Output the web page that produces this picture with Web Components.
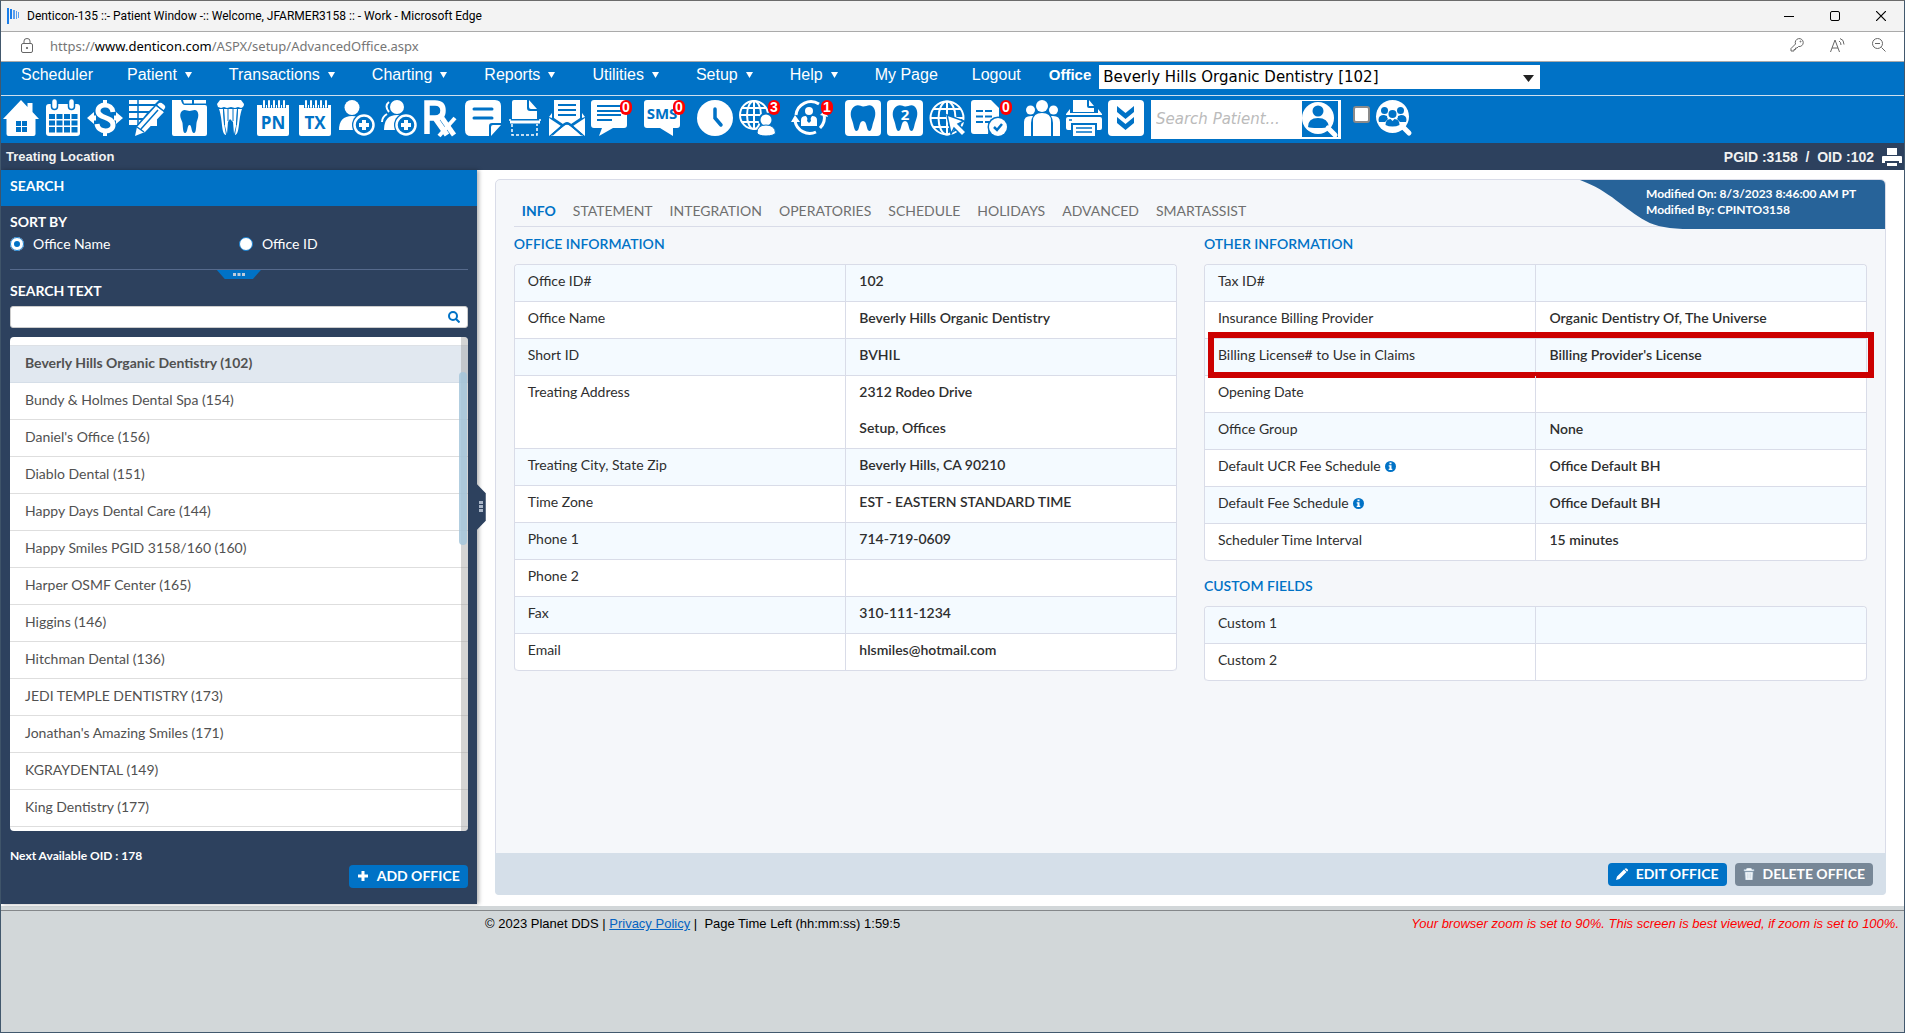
<!DOCTYPE html>
<html lang="en">
<head>
<meta charset="utf-8">
<title>Denticon - Advanced Office</title>
<style>
html,body{height:100%}
body{margin:0;
--blue:#0072c6;--navy:#2d415e;--line:#d9dce8;--panel:#f5f7fa;--bar:#d5dfe9;
--ui:Lato,"Open Sans",sans-serif;--sys:"Liberation Sans",Arial,sans-serif}
</style>
</head>
<body>
<app-window></app-window>
<script>
const define=(name,html,setup)=>{
  const tpl=document.createElement('template');
  tpl.innerHTML='<style>*{box-sizing:border-box}button{font:inherit;cursor:pointer}a{text-decoration:none;color:inherit}</style>'+html;
  customElements.define(name,class extends HTMLElement{
    constructor(){super();this.attachShadow({mode:'open'}).append(tpl.content.cloneNode(true));}
    connectedCallback(){if(setup&&!this.ready){this.ready=true;setup(this,this.shadowRoot);}}
  });
};

const W='fill="#fff"',B='fill="#0072c6"',SW='fill="none" stroke="#fff"',SB='fill="none" stroke="#0072c6"';
const tooth='M10 6C13 4 16 6 18 6.500S24 4 27 6C31 9 31 15 29 20C27 25 27 31 24.500 31C21 31 22.500 21 18 21S15 31 11.500 31C9 31 9 25 7 20C5 15 5 9 10 6Z';
const ICONS={
home:`<path ${W} d="M0 19 18 0l6.500 7V3h5v9L36 19h-3.500v15q0 2-2 2h-25q-2 0-2-2V19Z"/><path ${B} d="M13 21h5v5h-5zM19 21h5v5h-5zM13 27h5v5h-5zM19 27h5v5h-5z"/>`,
calendar:`<path ${W} d="M4 4h28q3 0 3 3v26q0 3-3 3H4q-3 0-3-3V7q0-3 3-3Z"/><rect x="6.500" y="-1.500" width="6" height="11" rx="3" ${W} stroke="#0072c6" stroke-width="1.500"/><rect x="23.500" y="-1.500" width="6" height="11" rx="3" ${W} stroke="#0072c6" stroke-width="1.500"/><path ${B} d="M4 14h6v5H4zM11.500 14h6v5h-6zM19 14h6v5h-6zM26.500 14h6v5h-6zM4 20.500h6v5H4zM11.500 20.500h6v5h-6zM19 20.500h6v5h-6zM26.500 20.500h6v5h-6zM4 27h6v5.500H4zM11.500 27h6v5.500h-6zM19 27h6v5.500h-6zM26.500 27h6v5.500h-6z"/>`,
dollar:`<path ${SW} stroke-width="5" d="M26 12C25 3 11 3 11 11C11 19 26 16 26 25C26 33 11 33 10 24"/><path ${W} d="M16 0h4v6h-4zM16 30h4v6h-4zM0 18l7-6v3.500h2v5H7V24ZM36 18l-7-6v3.500h-2v5h2V24Z"/>`,
notes:`<path ${W} d="M0 0h30l-4 4H0zM0 6h25l-5 5H0zM0 13h18l-4 5H0zM0 20h12l-4 5H0z"/><path ${SB} stroke-width="1.500" d="M9 0v26"/><path ${W} d="M6 36 8 27 27 6l8 6-19 20Z"/><path ${W} d="M28 5l2-2q2-1 4 1 3 2 2 4l-2 3Z"/><path ${W} d="M28 18v8h-7Z"/><path ${SB} stroke-width="1.500" d="m27 5 9 7M8 27l7 5M12 29l17-19"/>`,
chart:`<path ${W} d="M2 0h8q1 5 4 5h20q2 0 2 2v27q0 2-2 2H3q-2 0-2-2V0Z"/><path ${W} d="M12 0h9v3.500h-8zM23 0h12v3.500H23z"/><path ${B} d="M11 11C14 9 16 11 18.500 11S24 9 26 11C29 15 26 20 25.500 23C25 28 25 33 23 33C20 33 21 25 18.500 25S17 33 14 33C12 33 12 28 11.500 23C11 20 7 15 11 11Z"/>`,
perio:`<path ${W} d="M7 0h21l3 4q0 3-3 4l-3-1-3 1-4-1-4 1-3-1-3 1-3-1-1-3Z"/><path ${W} d="M6 9h4l1 14 2 12C8 34 10 20 6 9ZM29 9h-4l-1 14-2 12c5-1 3-15 7-26ZM11 9h13l-1 17-2 8-1-12-3-3-2 3-1 12-2-8Z"/><path ${SB} d="M10.500 9l1 16M15 9v12M20 9v12M24.500 9l-1 16"/>`,
pn:`<path ${W} d="M2 5h32v29q0 2-2 2H4q-2 0-2-2Z"/><path ${SB} stroke-width="4" d="M9 0v8M14 0v8M19 0v8M24 0v8M29 0v8"/><path ${SW} stroke-width="2" stroke-linecap="round" d="M9 1v6M14 1v6M19 1v6M24 1v6M29 1v6"/><text x="18" y="29" text-anchor="middle" font-family="Open Sans" font-weight="700" font-size="17" ${B}>PN</text>`,
user:`<circle ${W} cx="13" cy="7.500" r="7.500"/><path ${W} d="M0 30Q0 16 13 16Q19 16 22 19L14 30Z"/><circle cx="25" cy="25" r="12" ${B}/><circle cx="25" cy="25" r="9.500" ${SW} stroke-width="2.500"/><path ${W} d="M23 20h4v3h3v4h-3v3h-4v-3h-3v-4h3Z"/>`,
users:`<path ${SW} stroke-width="2" d="M8 2Q3 6 8 12M6 14Q1 17 1 22"/><circle ${W} cx="16" cy="7" r="7"/><path ${W} d="M3 30Q3 15 16 15Q21 15 24 18L14 30Z"/><circle cx="25" cy="25" r="12" ${B}/><circle cx="25" cy="25" r="9.500" ${SW} stroke-width="2.500"/><path ${W} d="M23 20h4v3h3v4h-3v3h-4v-3h-3v-4h3Z"/>`,
rx:`<path ${SW} stroke-width="5.500" d="M4 34V3H12Q20 3 20 10.500T12 18H4M12 18 24 35"/><path ${SW} stroke-width="4" d="M16 36 32 18"/><path ${SW} stroke-width="5" d="m19 18 12 17"/>`,
note:`<path ${W} d="M6 0h24q6 0 6 6v17H27q-3 0-3 3v10H6q-6 0-6-6V6q0-6 6-6ZM36 25 26 36V27q0-2 2-2Z"/><path ${SB} stroke-width="3" stroke-linecap="round" d="M9 9h18M9 18h18"/>`,
scan:`<path ${W} d="M7 0h13v8q0 3 3 3h7v8H5V2q0-2 2-2Z"/><path ${W} d="m22 0 8 9h-6q-2 0-2-2ZM3 20.500h30v3H3z"/><path ${SW} stroke-width="1.500" d="M3 21v-2M33 21v-2"/><path ${SW} stroke-width="1.500" stroke-dasharray="3 2" d="M5 24v11h25V24"/>`,
mail:`<path ${W} d="M5 0h26v18l-9 6q-4-4-8 0l-9-6Z"/><path ${W} d="M0 17l3-4v5ZM36 17l-3-4v5ZM0 18l12 8L0 36ZM36 18l-12 8 12 10ZM2 36 15 26q3-3 6 0L34 36Z"/><path ${SB} stroke-width="2" d="M9 5h18M9 10h18M9 15h18M3 35l10-9q5-5 10 0l10 9"/>`,
chat:`<path ${W} d="M3 0h30q3 0 3 3v22q0 3-3 3H22L8 36l3-8H3q-3 0-3-3V3q0-3 3-3Z"/><path ${SB} stroke-width="2" d="M6 6h24M6 11h24M6 15h24M6 20h15"/>`,
sms:`<path ${W} d="M3 0h30q3 0 3 3v22q0 3-3 3h-4v8l-13-8H3q-3 0-3-3V3q0-3 3-3Z"/><text x="18" y="19" text-anchor="middle" font-family="Open Sans" font-weight="700" font-size="15" ${B}>SMS</text>`,
clock:`<circle ${W} cx="18" cy="18" r="18"/><path ${SB} stroke-width="3.500" stroke-linecap="round" d="M18 9v9l6 7"/>`,
globeuser:`<g ${SW} stroke-width="2"><circle cx="15" cy="15" r="14"/><ellipse cx="15" cy="15" rx="7" ry="14"/><path d="M15 1v28M1 15h28M3 8h24M3 22h24"/></g><circle cx="27" cy="20" r="7.500" ${B}/><circle cx="27" cy="20" r="5.500" ${W}/><path ${W} stroke="#0072c6" d="M18 33q0-8 9-8t9.500 8q-2 3-9.500 3T18 33Z"/>`,
sync:`<path ${SW} stroke-width="3" d="M4 15A15 15 0 0 1 27 4M32 14A15 15 0 0 1 28 28M24 32A15 15 0 0 1 3 21"/><path ${W} d="M-1 22 3 15 8 22ZM28 15l5-5 3 7Z"/><circle ${W} cx="17" cy="11" r="4"/><path ${W} d="M9 26v-6q0-4 5-4l3 5 3-5q5 0 5 4v6Z"/><path ${B} d="m16 16-1 5 2 2 2-2-1-5Z"/>`,
tooth:`<rect ${W} width="36" height="36" rx="4"/><path ${B} d="${tooth}"/>`,
tooth2:`<rect ${W} width="36" height="36" rx="4"/><path ${B} d="${tooth}"/><text x="18" y="20" text-anchor="middle" font-family="Open Sans" font-weight="700" font-size="15" ${W}>2</text>`,
globe:`<g ${SW} stroke-width="2"><circle cx="18" cy="18" r="16.500"/><ellipse cx="18" cy="18" rx="8.500" ry="16.500"/><path d="M18 1v34M1 18h34M4 9h28M4 27h28"/></g><path ${W} stroke="#0072c6" stroke-width="1.500" d="m18 15 17 6-6 3 8 8-4 4-8-8-3 6Z"/>`,
doc:`<path ${W} d="M3 0h17l8 8v11q-10 1-11 15H3q-3 0-3-3V3q0-3 3-3Z"/><path ${SB} stroke-width="2" d="M5 11h7M14 11h7M5 16.500h7M14 16.500h7M5 22h7M14 22h5"/><circle cx="27" cy="27" r="10.500" ${B}/><circle cx="27" cy="27" r="9" ${W}/><path ${SB} stroke-width="2.500" d="m23 27 3 3 5-6"/>`,
group:`<circle ${W} cx="18" cy="6" r="6"/><circle ${W} cx="6.500" cy="10" r="4.500"/><circle ${W} cx="29.500" cy="10" r="4.500"/><path ${W} d="M9 36V21q0-8 9-8t9 8v15ZM0 36V22q0-6 7-6h2q-2 3-2 7v13ZM36 36V22q0-6-7-6h-2q2 3 2 7v13Z"/>`,
printer:`<path ${W} d="M7 0h14v6q0 2 2 2h5v4H7ZM23 0l5 6h-5Z"/><path ${W} d="M4 9v4h28V9l4 5v1H0v-1ZM2 17h32q2 0 2 2v9q0 2-2 2h-3v-7H5v7H2q-2 0-2-2v-9q0-2 2-2Z"/><path ${W} d="M7 25h22v11H7z"/><path ${SB} stroke-width="1.500" d="M10 28h16M10 32h16M3 20h3"/>`,
down:`<rect ${W} width="36" height="36" rx="4"/><path ${B} d="m9 6 8.500 7L26 6v6l-8.500 7L9 12ZM9 17l8.500 7 8.500-7v6l-8.500 7L9 23Z"/>`,
find:`<path ${B} d="M0 0h36v36H0z"/><circle ${W} cx="16" cy="17" r="16"/><circle ${B} cx="16" cy="10" r="5.500"/><path ${B} d="M6 26q0-9 10-9t11 9q-3 1-11 1T6 26Z"/><path ${SW} stroke-width="5" stroke-linecap="round" d="m26 27 7 7"/>`,
findgroup:`<circle ${W} cx="16.500" cy="16.500" r="16.500"/><path ${SW} stroke-width="5" stroke-linecap="round" d="m27 27 6 6"/><circle ${B} cx="8.500" cy="10.500" r="3.500"/><circle ${B} cx="24.500" cy="10.500" r="3.500"/><path ${B} d="M2.500 20q0-5 5.500-5l3 1q0 2 1 3l-3 3H3ZM30.500 20q0-5-5.500-5l-3 1q0 2-1 3l3 3h6Z"/><circle ${B} cx="16.500" cy="14" r="4"/><path ${B} d="M9.500 25q0-6 5-6l2 2 2-2q5 0 5 6-3 1.500-7 1.500t-7-1.500Z"/>`
};
ICONS.tx=ICONS.pn.replace('>PN<','>TX<');

define('tool-icon',`<style>
:host{display:block;position:relative;width:36px;height:36px;flex:none}
:host([badge]){margin-right:11px}
button{display:block;width:100%;height:100%;padding:0;border:0;background:none}
svg{display:block;width:36px;height:36px;overflow:visible}
.b{position:absolute;top:0;right:-5px;width:12px;height:15px;border-radius:7px;background:#f00;color:#fff;font:700 14px/15px var(--sys);text-align:center}
</style><button><svg viewBox="0 0 36 36"></svg></button>`,(el,r)=>{
  r.querySelector('svg').innerHTML=ICONS[el.getAttribute('name')];
  r.querySelector('button').setAttribute('aria-label',el.getAttribute('name'));
  if(el.hasAttribute('badge')){const s=document.createElement('span');s.className='b';s.textContent=el.getAttribute('badge');r.append(s);}
});

define('title-bar',`<style>
:host{display:flex;align-items:center;height:31px;padding:0 18px 0 6px;background:#f3f3f3;border-bottom:1px solid #aaa;font:12px/16px Roboto,sans-serif;color:#000}
.t{flex:1;margin-left:7px}svg{display:block}.w{display:flex;gap:36px}
</style><svg width="13" height="16" viewBox="0 0 13 16"><path fill="#1a7de8" d="M0 0h2v16H0zM3 1h2v10H3z"/><path fill="#5a9fee" d="M6 2h2v9H6zM9 3h1v8H9zM11 4h1v6h-1z"/></svg>
<div class="t">Denticon-135 ::- Patient Window -:: Welcome, JFARMER3158 :: - Work - Microsoft Edge</div>
<div class="w"><svg width="10" height="10"><path stroke="#000" d="M0 5.500h10"/></svg><svg width="10" height="10"><rect x=".5" y=".5" width="9" height="9" rx="1.500" fill="none" stroke="#000"/></svg><svg width="10" height="10"><path stroke="#000" stroke-width="1.200" d="m0 0 10 10M10 0 0 10"/></svg></div>`);

define('address-bar',`<style>
:host{display:flex;align-items:center;height:30px;padding:0 18px 2px 20px;background:#fff;border-bottom:1px solid #aaa;font:13px/20px "Noto Sans",sans-serif;color:#767676}
.u{flex:1;margin-left:17px}b{font-weight:400;color:#000}svg{display:block}.i{display:flex;gap:26px}
</style><svg width="12" height="16" viewBox="0 0 12 16" fill="none" stroke="#666"><rect x=".5" y="5.500" width="11" height="9" rx="1.500"/><path d="M3 5V3q0-2.500 3-2.500T9 3v2"/><circle cx="6" cy="10" r=".7" fill="#666"/></svg>
<div class="u">https://<b>www.denticon.com</b>/ASPX/setup/AdvancedOffice.aspx</div>
<div class="i"><svg width="14" height="14" viewBox="0 0 14 14" fill="none" stroke="#666"><path d="M5.500 6A4 4 0 1 1 8.500 8.500L7 10H5.500v1.500H4V13H1v-2.500Z"/><circle cx="10.500" cy="3.500" r=".5"/></svg><svg width="16" height="15" viewBox="0 0 16 15" fill="none" stroke="#666"><path d="m.5 14 4.500-12L9.500 14M2 10h6M9 3q2 1 2 4M10 .5q4 1 4 6"/></svg><svg width="14" height="14" viewBox="0 0 14 14" fill="none" stroke="#666"><circle cx="5.500" cy="5.500" r="5"/><path d="m9.500 9.500 4 4M3 5.500h5"/></svg></div>`);

define('nav-item',`<style>
:host{display:block;font:16px/20px var(--sys);color:#fff;white-space:nowrap}
a{display:flex;align-items:center}
svg{display:none;margin:0 3px 0 8px}
:host([menu]) svg{display:block}
</style><a href="#"><slot></slot><svg width="7" height="6"><path fill="#fff" d="M0 0h7L3.500 6Z"/></svg></a>`);

define('main-nav',`<style>
:host{display:flex;align-items:flex-start;height:34px;padding:3px 0 0 20px;background:var(--blue);border-bottom:1px solid #cfe0ee;color:#fff}
nav{display:flex;gap:34px}
label{margin:1px 8px 0 28px;font:700 15px/18px var(--sys);color:#fff}
.s{position:relative;width:441px}
select{appearance:none;display:block;width:100%;height:24px;padding:0 4px;border:0;border-radius:0;background:#fff;font:15px/24px "DejaVu Sans",sans-serif;color:#000}
svg{position:absolute;right:6px;top:10px}
</style><nav><nav-item>Scheduler</nav-item><nav-item menu>Patient</nav-item><nav-item menu>Transactions</nav-item><nav-item menu>Charting</nav-item><nav-item menu>Reports</nav-item><nav-item menu>Utilities</nav-item><nav-item menu>Setup</nav-item><nav-item menu>Help</nav-item><nav-item>My Page</nav-item><nav-item>Logout</nav-item></nav>
<label for="o">Office</label><div class="s"><select id="o"><option>Beverly Hills Organic Dentistry [102]</option></select><svg width="11" height="7"><path fill="#222" d="M0 0h11L5.500 7Z"/></svg></div>`);

define('icon-bar',`<style>
:host{display:flex;align-items:center;gap:6px;height:47px;padding:0 0 3px 2px;background:var(--blue)}
.f{display:flex;align-items:center;width:190px;height:39px;padding:0 2px 0 0;margin:2px 6px 0 1px;background:#fff;border:1px solid #fff}
.f input{flex:1;min-width:0;height:30px;border:0;padding:0 4px;outline:0;background:none;font:italic 15px/30px "DejaVu Sans",sans-serif}
.f input::placeholder{color:#bbb;opacity:1}
.c{appearance:none;width:17px;height:17px;margin:0 0 8px;border:2px solid #8a8a8a;border-radius:3px;background:#fff}
</style><tool-icon name="home"></tool-icon><tool-icon name="calendar"></tool-icon><tool-icon name="dollar"></tool-icon><tool-icon name="notes"></tool-icon><tool-icon name="chart"></tool-icon><tool-icon name="perio"></tool-icon><tool-icon name="pn"></tool-icon><tool-icon name="tx"></tool-icon><tool-icon name="user"></tool-icon><tool-icon name="users"></tool-icon><tool-icon name="rx"></tool-icon><tool-icon name="note"></tool-icon><tool-icon name="scan"></tool-icon><tool-icon name="mail"></tool-icon><tool-icon name="chat" badge="0"></tool-icon><tool-icon name="sms" badge="0"></tool-icon><tool-icon name="clock"></tool-icon><tool-icon name="globeuser" badge="3"></tool-icon><tool-icon name="sync" badge="1"></tool-icon><tool-icon name="tooth"></tool-icon><tool-icon name="tooth2"></tool-icon><tool-icon name="globe"></tool-icon><tool-icon name="doc" badge="0"></tool-icon><tool-icon name="group"></tool-icon><tool-icon name="printer"></tool-icon><tool-icon name="down"></tool-icon>
<div class="f"><input aria-label="Search Patient" placeholder="Search Patient..."><tool-icon name="find"></tool-icon></div><input class="c" type="checkbox" aria-label="Search all"><tool-icon name="findgroup"></tool-icon>`);

define('context-bar',`<style>
:host{display:flex;align-items:center;height:27px;padding:0 2px 0 5px;background:var(--navy);color:#f2f2f2;font:700 13px/20px var(--sys)}
span{flex:1}b{font-size:14px;white-space:pre;margin-right:8px}
button{padding:0;border:0;background:none}svg{display:block}
</style><span>Treating Location</span><b>PGID :3158  /  OID :102</b><button aria-label="Print"><svg width="20" height="18" viewBox="0 0 20 18"><path fill="#fff" d="M5 0h10v7H5zM1 8h18q1 0 1 1v6h-3v-2H3v2H0V9q0-1 1-1ZM5 15h10v3H5z"/></svg></button>`);

define('action-button',`<style>
:host{display:block}
button{display:flex;align-items:center;gap:8px;height:23px;padding:0 8px 1px;border:0;border-radius:4px;background:var(--blue);color:#fff;font:700 14px/20px var(--ui);white-space:nowrap}
:host([muted]) button{background:#778797}
svg{display:block;width:12px;height:12px}
</style><button><svg viewBox="0 0 12 12" fill="#fff"></svg><slot></slot></button>`,(el,r)=>{
  r.querySelector('svg').innerHTML={
    plus:'<path d="M4.500 1h3v3.500H11v3H7.500V11h-3V7.500H1v-3h3.500Z"/>',
    pencil:'<path d="M0 12 1 8.500 8 1.500l2.500 2.500-7 7ZM9 .7q1-1 2 0l.5.5q1 1 0 2L11 3.500 8.500 1Z"/>',
    trash:'<path d="M4 0h4l1 1.500h2V3H1V1.500h2ZM2 4h8l-.5 8h-7ZM4.200 5.200v5.500M6 5.200v5.500M7.800 5.200v5.500" stroke="#9fb8cc" stroke-width=".6"/>'
  }[el.getAttribute('icon')];
});

define('office-list',`<style>
:host{display:block;position:relative;flex:1 1 0;min-height:0;overflow:hidden;border-radius:4px;background:#fff;padding-top:8px;font:14px/18px var(--ui);color:#515151}
ul{margin:0;padding:0;list-style:none;border-top:1px solid #dde1e6}
li{height:37px;border-bottom:1px solid #dedede}
li.on{background:#e1e8f0;font-weight:700;border-color:#d5dee8}
a{display:block;padding:8px 15px 10px}
i{position:absolute;top:0;bottom:0;right:0;width:7px;background:rgba(160,160,160,.45)}
u{position:absolute;top:35px;right:1px;width:8px;height:173px;border-radius:4px;background:rgba(165,198,218,.85)}
</style><ul></ul><i></i><u></u>`,(el,r)=>{
  r.querySelector('ul').innerHTML=['Beverly Hills Organic Dentistry (102)','Bundy &amp; Holmes Dental Spa (154)',"Daniel's Office (156)",'Diablo Dental (151)','Happy Days Dental Care (144)','Happy Smiles PGID 3158/160 (160)','Harper OSMF Center (165)','Higgins (146)','Hitchman Dental (136)','JEDI TEMPLE DENTISTRY (173)',"Jonathan's Amazing Smiles (171)",'KGRAYDENTAL (149)','King Dentistry (177)'].map((t,i)=>`<li${i?'':' class="on"'}><a href="#">${t}</a></li>`).join('');
});

define('office-sidebar',`<style>
:host{display:flex;flex-direction:column;position:relative;width:25%;background:var(--navy);color:#fff;font:14px/18px var(--ui);box-shadow:2px 0 4px rgba(0,0,0,.3)}
h2{margin:0;padding:7px 9px 11px;background:var(--blue);font-size:14px;line-height:18px}
.b{flex:1;display:flex;flex-direction:column;padding:6px 9px 16px;min-height:0}
h3{margin:0;font-size:14px;line-height:20px}
.r{display:flex;margin-top:3px;padding-bottom:16px;border-bottom:1px solid #566a8c}
.r div{flex:1;display:flex;align-items:center;gap:9px}
.r input{appearance:none;width:14px;height:14px;margin:0;border:1px solid #1980d0;border-radius:50%;background:#fff}
.r input:checked{border:4px solid #fff;background:var(--blue);outline:1px solid #1980d0;outline-offset:-1px}
.g{align-self:center;width:44px;height:9px;padding:0;border:0;background:var(--blue);clip-path:polygon(0 0,100% 0,82% 100%,18% 100%)}
.g svg,.h svg{display:block;margin:auto}
.t{margin-top:2px;line-height:20px;font-weight:700}
.s{display:flex;align-items:center;flex:none;height:22px;margin:5px 0 9px;padding:0 7px;border:1px solid #ccc;border-radius:3px;background:#fff}
.s input{flex:1;min-width:0;border:0;padding:0;outline:0;font:inherit}
.s svg{display:block}
.n{margin:16px 0 0;font:700 12px/18px var(--ui)}
.a{align-self:flex-end}
.h{position:absolute;left:100%;top:314px;width:9px;height:46px;padding:0;border:0;background:var(--navy);clip-path:polygon(0 0,100% 20%,100% 80%,0 100%)}
</style><h2>SEARCH</h2><div class="b"><h3>SORT BY</h3>
<div class="r"><div><input type="radio" name="s" id="n" checked><label for="n">Office Name</label></div><div><input type="radio" name="s" id="i"><label for="i">Office ID</label></div></div>
<button class="g" aria-label="Collapse"><svg width="12" height="4"><path fill="#bcd" d="M0 0h3v3H0zM4.500 0h3v3h-3zM9 0h3v3H9z"/></svg></button>
<label class="t" for="q">SEARCH TEXT</label>
<div class="s"><input id="q" type="text"><svg width="12" height="12" viewBox="0 0 12 12" fill="none" stroke="#0072c6" stroke-width="2"><circle cx="5" cy="5" r="4"/><path d="m8 8 3.500 3.500"/></svg></div>
<office-list></office-list><p class="n">Next Available OID : 178</p><action-button class="a" icon="plus">ADD OFFICE</action-button></div>
<button class="h" aria-label="Toggle sidebar"><svg width="4" height="12"><path fill="#aab6c8" d="M0 0h4v3H0zM0 4h4v3H0zM0 8h4v3H0z"/></svg></button>`);

define('tab-strip',`<style>
:host{display:flex;gap:17px;padding:21px 8px 5px;border-bottom:1px solid var(--line);font:14px/20px var(--ui);color:#6f6f6f}
.on{color:var(--blue);font-weight:700}
</style><a class="on" href="#">INFO</a><a href="#">STATEMENT</a><a href="#">INTEGRATION</a><a href="#">OPERATORIES</a><a href="#">SCHEDULE</a><a href="#">HOLIDAYS</a><a href="#">ADVANCED</a><a href="#">SMARTASSIST</a>`);

define('info-table',`<style>
:host{display:block}
h2{margin:0;padding:7px 0 10px;font:600 14px/20px var(--ui);color:var(--blue)}
table{width:100%;table-layout:fixed;border-spacing:0;border:1px solid var(--line);border-bottom:0;border-radius:4px;background:#fff;font:14px/32px var(--ui);color:#2e2e2e}
tr{position:relative}
th,td{height:37px;padding:0 13px;border-bottom:1px solid var(--line);text-align:left;vertical-align:top;font-weight:400}
td{border-left:1px solid var(--line);font-weight:600}
td div{height:36px}
tr.z th,tr.z td{background:#f4faff}
tr:first-child th{border-top-left-radius:4px}tr:first-child td{border-top-right-radius:4px}
tr:last-child th{border-bottom-left-radius:4px}tr:last-child td{border-bottom-right-radius:4px}
svg{display:inline-block;vertical-align:-1px;margin-left:4px}
.m{position:absolute;inset:-7px -8px -2px 3px;border:6px solid #c00;pointer-events:none}
</style><h2></h2><table><tbody></tbody></table>`,(el,r)=>{
  r.querySelector('h2').textContent=el.getAttribute('heading');
  const info='<svg width="11" height="11" viewBox="0 0 11 11"><circle cx="5.500" cy="5.500" r="5.500" fill="#0072c6"/><path fill="#fff" d="M4.500 1.500h2v1.700h-2zM3.700 4.200h2.800v3.600h.8V9H3.700V7.800h.8V5.400h-.8Z"/></svg>';
  let z=true;
  r.querySelector('tbody').innerHTML=[...el.children].map(c=>{
    const v=c.dataset.value.split('|').map(x=>`<div>${x}</div>`).join('');
    const h=`<tr${z?' class="z"':''}><th scope="row">${c.dataset.label}${c.hasAttribute('data-info')?info:''}</th><td>${v}${c.hasAttribute('data-mark')?'<span class="m"></span>':''}</td></tr>`;
    z=!z;return h;}).join('');
});

define('modified-banner',`<style>
:host{display:block;position:relative;width:305px;height:49px;color:#fff;font:700 12px/16px var(--ui)}
svg{display:block;width:100%;height:100%}
p{position:absolute;left:66px;top:6px;margin:0;white-space:nowrap}
</style><svg viewBox="0 0 305 49" preserveAspectRatio="none"><path fill="#276399" d="M0 0C30 11 44 29 66 41Q80 49 110 49H305V5Q305 0 300 0Z"/></svg><p>Modified On: 8/3/2023 8:46:00 AM PT<br>Modified By: CPINTO3158</p>`);

define('office-panel',`<style>
:host{display:flex;flex-direction:column;position:relative;flex:1;min-width:0;margin:9px 18px 9px;border-radius:5px;background:var(--panel);border:1px solid var(--line)}
.c{flex:1;padding:0 18px}
.g{display:grid;grid-template-columns:1fr 1fr;gap:27px;align-items:start}
.x{margin-top:8px}
modified-banner{position:absolute;right:0;top:0}
footer{display:flex;justify-content:flex-end;align-items:center;gap:8px;height:42px;margin:0 -1px -1px;padding:0 13px;background:var(--bar);border-radius:0 0 4px 4px}
</style><div class="c"><tab-strip></tab-strip><div class="g">
<info-table heading="OFFICE INFORMATION"><i data-label="Office ID#" data-value="102"></i><i data-label="Office Name" data-value="Beverly Hills Organic Dentistry"></i><i data-label="Short ID" data-value="BVHIL"></i><i data-label="Treating Address" data-value="2312 Rodeo Drive|Setup, Offices"></i><i data-label="Treating City, State Zip" data-value="Beverly Hills, CA 90210"></i><i data-label="Time Zone" data-value="EST - EASTERN STANDARD TIME"></i><i data-label="Phone 1" data-value="714-719-0609"></i><i data-label="Phone 2" data-value=""></i><i data-label="Fax" data-value="310-111-1234"></i><i data-label="Email" data-value="hlsmiles@hotmail.com"></i></info-table>
<div><info-table heading="OTHER INFORMATION"><i data-label="Tax ID#" data-value=""></i><i data-label="Insurance Billing Provider" data-value="Organic Dentistry Of, The Universe"></i><i data-label="Billing License# to Use in Claims" data-value="Billing Provider's License" data-mark></i><i data-label="Opening Date" data-value=""></i><i data-label="Office Group" data-value="None"></i><i data-label="Default UCR Fee Schedule" data-info data-value="Office Default BH"></i><i data-label="Default Fee Schedule" data-info data-value="Office Default BH"></i><i data-label="Scheduler Time Interval" data-value="15 minutes"></i></info-table>
<info-table class="x" heading="CUSTOM FIELDS"><i data-label="Custom 1" data-value=""></i><i data-label="Custom 2" data-value=""></i></info-table></div></div></div>
<footer><action-button icon="pencil">EDIT OFFICE</action-button><action-button icon="trash" muted>DELETE OFFICE</action-button></footer><modified-banner></modified-banner>`);

define('page-footer',`<style>
:host{display:block;min-height:126px;padding-top:4px;background:#d2d7d9;font:13px/18px var(--sys);color:#000}
div{display:grid;grid-template-columns:1fr auto;border-top:1px solid #84878a;padding:4px 5px 0 484px}
a{color:#0563c1;text-decoration:underline}em{color:#f00}
span{white-space:pre}
</style><div><span>© 2023 Planet DDS | <a href="#">Privacy Policy</a> |  Page Time Left (hh:mm:ss) 1:59:5</span><em>Your browser zoom is set to 90%. This screen is best viewed, if zoom is set to 100%.</em></div>`);

define('app-window',`<style>
:host{display:flex;flex-direction:column;height:100vh;box-sizing:border-box;border:1px solid #42586d;border-top-color:#6b6b6b;background:#fff}
:host>*{flex:none}
:host>main{flex:1 1 0;display:flex;min-height:0;margin-bottom:2px}
</style><title-bar></title-bar><address-bar></address-bar><main-nav></main-nav><icon-bar></icon-bar><context-bar></context-bar><main><office-sidebar></office-sidebar><office-panel></office-panel></main><page-footer></page-footer>`);
</script>
</body>
</html>
